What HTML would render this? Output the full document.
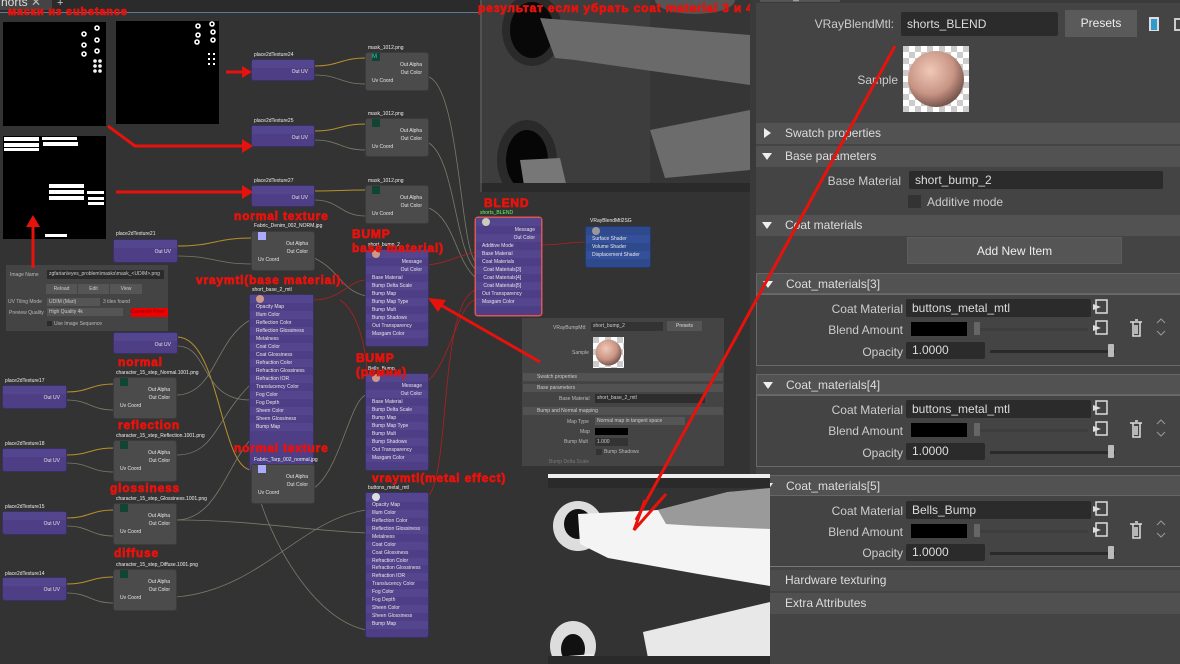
<!DOCTYPE html>
<html><head><meta charset="utf-8">
<style>
*{margin:0;padding:0;box-sizing:border-box}
body{width:1180px;height:664px;overflow:hidden;background:#333;font-family:"Liberation Sans","DejaVu Sans",sans-serif;position:relative}
.a{position:absolute}
.n{position:absolute;background:#4d3e86;border-radius:2px;color:#e6e6e6;font-size:5px;line-height:8px;box-shadow:0 0 0 1px #3a2f66}
.g{position:absolute;background:#4b4b4b;border-radius:2px;color:#e6e6e6;font-size:5px;line-height:8px;box-shadow:0 0 0 1px #3c3c3c}
.n div,.g div{padding:0 6px;white-space:nowrap;overflow:hidden}
.n div:nth-child(odd){background:#54458f}
.r{text-align:right}
.lb{position:absolute;color:#eee;font-size:5px;white-space:nowrap}
.ann{position:absolute;color:#e8120c;font-weight:900;font-size:12px;letter-spacing:0.8px;white-space:nowrap;font-family:"Liberation Sans","DejaVu Sans",sans-serif;-webkit-text-stroke:0.7px #e8120c}
.mk{position:absolute;background:#000}
.ic{display:inline-block;width:8px;height:8px;vertical-align:middle}
.hd{position:absolute;left:756px;width:424px;height:21px;background:#525252;color:#ddd;font-size:12px;line-height:21px;padding-left:29px}
.tri{position:absolute;left:6px;top:7px;width:0;height:0;border-left:5px solid transparent;border-right:5px solid transparent;border-top:7px solid #eee}
.trr{position:absolute;left:8px;top:5px;width:0;height:0;border-top:5px solid transparent;border-bottom:5px solid transparent;border-left:7px solid #eee}
.lab{position:absolute;color:#ccc;font-size:12px;text-align:right;white-space:nowrap}
.fld{position:absolute;background:#2b2b2b;color:#ddd;font-size:12px;line-height:19px;padding-left:6px;border-radius:2px}
.blk{position:absolute;background:#000;height:14px;width:56px}
.sl{position:absolute;height:3px;background:#2a2a2a}
.kn{position:absolute;width:6px;height:13px;background:#bbb;border-radius:1px}
.box{position:absolute;left:756px;width:424px;border:1px solid #6a6a6a;border-right:none}
</style></head><body>

<!-- top bar -->
<div class="a" style="left:0;top:0;width:480px;height:12px;background:#2b2b2b"></div>
<div class="a" style="left:0;top:-4px;width:52px;height:14px;background:#444;color:#ddd;font-size:12px;line-height:12px;padding-left:1px">horts <span style="color:#bbb">✕</span></div>
<div class="a" style="left:57px;top:-3px;color:#ccc;font-size:11px">+</div>
<div class="a" style="left:0;top:12px;width:480px;height:1px;background:#5a7b9a"></div>

<!-- masks -->
<div class="mk" style="left:3px;top:22px;width:103px;height:104px"></div>
<div class="mk" style="left:116px;top:21px;width:103px;height:103px"></div>
<div class="mk" style="left:3px;top:136px;width:103px;height:103px"></div>
<svg class="a" style="left:0;top:0" width="240" height="240">
<g fill="none" stroke="#fff" stroke-width="1.6">
<circle cx="84" cy="34" r="2"/><circle cx="97" cy="28" r="2"/><circle cx="84" cy="45" r="2"/><circle cx="97" cy="40" r="2"/><circle cx="84" cy="54" r="2"/><circle cx="97" cy="51" r="2"/>
<circle cx="95" cy="61" r="1"/><circle cx="100" cy="61" r="1"/><circle cx="95" cy="66" r="1"/><circle cx="100" cy="66" r="1"/><circle cx="95" cy="71" r="1"/><circle cx="100" cy="71" r="1"/>
<circle cx="198" cy="26" r="2"/><circle cx="212" cy="24" r="2"/><circle cx="198" cy="35" r="2"/><circle cx="213" cy="32" r="2"/><circle cx="197" cy="42" r="2"/><circle cx="213" cy="40" r="2"/>
</g>
<g fill="#fff"><rect x="208" y="53" width="2" height="2"/><rect x="213" y="53" width="2" height="2"/><rect x="208" y="58" width="2" height="2"/><rect x="213" y="58" width="2" height="2"/><rect x="208" y="63" width="2" height="2"/><rect x="213" y="63" width="2" height="2"/>
<rect x="4" y="137" width="35" height="4"/><rect x="4" y="143" width="35" height="4"/><rect x="4" y="148" width="35" height="3"/><rect x="42" y="137" width="35" height="3"/><rect x="43" y="142" width="35" height="4"/>
<rect x="49" y="184" width="35" height="4"/><rect x="49" y="190" width="35" height="4"/><rect x="49" y="196" width="35" height="4"/><rect x="87" y="191" width="17" height="3"/><rect x="88" y="197" width="16" height="3"/><rect x="88" y="202" width="16" height="3"/><rect x="45" y="234" width="22" height="3"/></g>
</svg>

<!-- image name panel -->
<div class="a" style="left:6px;top:265px;width:162px;height:66px;background:#444"></div>
<div class="a" style="left:10px;top:272px;font-size:5px;color:#bbb">Image Name</div>
<div class="a" style="left:47px;top:270px;width:117px;height:9px;background:#2b2b2b;font-size:5px;color:#ccc;line-height:9px;padding-left:2px">zgfarian\eyes_problem\masks\mask_&lt;UDIM&gt;.png</div>
<div class="a" style="left:46px;top:284px;width:31px;height:10px;background:#555;font-size:5px;color:#ccc;text-align:center;line-height:10px">Reload</div>
<div class="a" style="left:78px;top:284px;width:31px;height:10px;background:#555;font-size:5px;color:#ccc;text-align:center;line-height:10px">Edit</div>
<div class="a" style="left:110px;top:284px;width:32px;height:10px;background:#555;font-size:5px;color:#ccc;text-align:center;line-height:10px">View</div>
<div class="a" style="left:8px;top:299px;font-size:5px;color:#bbb">UV Tiling Mode</div>
<div class="a" style="left:47px;top:298px;width:53px;height:8px;background:#555;font-size:5px;color:#ccc;line-height:8px;padding-left:2px">UDIM (Mari)</div>
<div class="a" style="left:103px;top:299px;font-size:5px;color:#bbb">3 tiles found</div>
<div class="a" style="left:9px;top:310px;font-size:5px;color:#bbb">Preview Quality</div>
<div class="a" style="left:47px;top:308px;width:76px;height:8px;background:#555;font-size:5px;color:#ccc;line-height:8px;padding-left:2px">High Quality 4k</div>
<div class="a" style="left:131px;top:308px;width:37px;height:9px;background:#e00;font-size:5px;color:#800;line-height:9px">Generate Previ</div>
<div class="a" style="left:47px;top:321px;width:5px;height:5px;background:#2b2b2b"></div>
<div class="a" style="left:54px;top:321px;font-size:5px;color:#bbb">Use Image Sequence</div>

<!-- top render -->
<svg class="a" style="left:480px;top:0" width="270" height="192">
<rect x="0" y="0" width="270" height="192" fill="#3d3d3d"/>
<rect x="170" y="0" width="100" height="192" fill="#363636"/>
<ellipse cx="52" cy="30" rx="30" ry="36" fill="#2a2a2a"/><ellipse cx="52" cy="30" rx="22" ry="28" fill="#080808"/>
<ellipse cx="47" cy="160" rx="30" ry="40" fill="#2a2a2a"/><ellipse cx="47" cy="160" rx="21" ry="30" fill="#060606"/>
<path d="M60 18 L270 35 L270 85 L95 60 L75 58 Z" fill="#6a6a6a"/>
<path d="M170 130 L270 110 L270 170 L185 178 Z" fill="#6c6c6c"/>
<path d="M40 160 L80 158 L88 192 L45 192 Z" fill="#777"/>
<ellipse cx="215" cy="0" rx="40" ry="14" fill="#555"/>
<rect x="0" y="183" width="270" height="9" fill="#2a2a2a"/>
<line x1="1" y1="0" x2="1" y2="192" stroke="#666"/>
</svg>
<div class="ann" style="left:478px;top:1px;font-size:12px">результат если убрать coat material 3 и 4</div>

<!-- right attribute panel -->
<div class="a" style="left:750px;top:0;width:430px;height:664px;background:#444"></div>
<div class="a" style="left:750px;top:0;width:6px;height:664px;background:#3a3a3a"></div>
<div class="a" style="left:756px;top:0;width:424px;height:3px;background:#3a3a3a"></div>
<div class="a" style="left:760px;top:-7px;width:80px;height:9px;background:#555;color:#ddd;font-size:10px;line-height:8px;padding-left:6px">shorts_BLEND</div>
<div class="lab" style="left:800px;top:17px;width:94px">VRayBlendMtl:</div>
<div class="fld" style="left:901px;top:12px;width:157px;height:24px;line-height:24px">shorts_BLEND</div>
<div class="a" style="left:1065px;top:10px;width:72px;height:27px;background:#5a5a5a;color:#eee;font-size:12px;text-align:center;line-height:27px">Presets</div>
<div class="a" style="left:1149px;top:17px;width:10px;height:14px;background:#39c;border:2px solid #ddd;border-bottom-width:1px"></div>
<div class="a" style="left:1174px;top:18px;width:8px;height:13px;border:2px solid #ccc"></div>
<div class="lab" style="left:840px;top:73px;width:58px">Sample</div>
<svg class="a" style="left:903px;top:46px" width="66" height="66">
<defs><pattern id="ck" width="12" height="12" patternUnits="userSpaceOnUse"><rect width="12" height="12" fill="#fff"/><rect width="6" height="6" fill="#ccc"/><rect x="6" y="6" width="6" height="6" fill="#ccc"/></pattern>
<radialGradient id="sp" cx="0.4" cy="0.35" r="0.7"><stop offset="0" stop-color="#f0c8b8"/><stop offset="0.6" stop-color="#c89484"/><stop offset="1" stop-color="#6a4a44"/></radialGradient></defs>
<rect width="66" height="66" fill="url(#ck)"/><circle cx="33" cy="33" r="28" fill="url(#sp)"/></svg>
<div class="hd" style="top:123px"><span class="trr"></span>Swatch properties</div>
<div class="hd" style="top:146px"><span class="tri"></span>Base parameters</div>
<div class="lab" style="left:800px;top:174px;width:101px">Base Material</div>
<div class="fld" style="left:909px;top:171px;width:254px;height:18px;line-height:18px">short_bump_2</div>
<div class="a" style="left:908px;top:195px;width:13px;height:13px;background:#333"></div>
<div class="a" style="left:927px;top:195px;color:#ccc;font-size:12px">Additive mode</div>
<div class="hd" style="top:215px"><span class="tri"></span>Coat materials</div>
<div class="a" style="left:907px;top:237px;width:215px;height:27px;background:#555;color:#eee;font-size:12px;text-align:center;line-height:27px;border:1px solid #5c5c5c">Add New Item</div>

<!-- coat blocks -->
<div class="hd" style="top:273px;left:756px;border:1px solid #666;border-right:none"><span class="tri"></span>Coat_materials[3]</div>
<div class="box" style="top:294px;height:72px"></div>
<div class="lab" style="left:800px;top:302px;width:103px">Coat Material</div>
<div class="fld" style="left:906px;top:299px;width:185px;height:18px;line-height:18px">buttons_metal_mtl</div>
<div class="lab" style="left:800px;top:323px;width:103px">Blend Amount</div>
<div class="blk" style="left:911px;top:322px"></div><div class="sl" style="left:975px;top:328px;width:113px;background:#3e3e3e"></div><div class="kn" style="left:974px;top:322px;background:#666"></div>
<div class="lab" style="left:800px;top:345px;width:103px">Opacity</div>
<div class="fld" style="left:906px;top:342px;width:79px;height:17px;line-height:17px">1.0000</div>
<div class="sl" style="left:990px;top:350px;width:125px"></div><div class="kn" style="left:1108px;top:344px"></div>

<div class="hd" style="top:374px;border:1px solid #666;border-right:none"><span class="tri"></span>Coat_materials[4]</div>
<div class="box" style="top:395px;height:72px"></div>
<div class="lab" style="left:800px;top:403px;width:103px">Coat Material</div>
<div class="fld" style="left:906px;top:400px;width:185px;height:18px;line-height:18px">buttons_metal_mtl</div>
<div class="lab" style="left:800px;top:424px;width:103px">Blend Amount</div>
<div class="blk" style="left:911px;top:423px"></div><div class="sl" style="left:975px;top:429px;width:113px;background:#3e3e3e"></div><div class="kn" style="left:974px;top:423px;background:#666"></div>
<div class="lab" style="left:800px;top:446px;width:103px">Opacity</div>
<div class="fld" style="left:906px;top:443px;width:79px;height:17px;line-height:17px">1.0000</div>
<div class="sl" style="left:990px;top:451px;width:125px"></div><div class="kn" style="left:1108px;top:445px"></div>

<div class="hd" style="top:475px;border:1px solid #666;border-right:none"><span class="tri"></span>Coat_materials[5]</div>
<div class="lab" style="left:800px;top:504px;width:103px">Coat Material</div>
<div class="fld" style="left:906px;top:501px;width:185px;height:18px;line-height:18px">Bells_Bump</div>
<div class="lab" style="left:800px;top:525px;width:103px">Blend Amount</div>
<div class="blk" style="left:911px;top:524px"></div><div class="sl" style="left:975px;top:530px;width:113px;background:#3e3e3e"></div><div class="kn" style="left:974px;top:524px;background:#666"></div>
<div class="lab" style="left:800px;top:546px;width:103px">Opacity</div>
<div class="fld" style="left:906px;top:544px;width:79px;height:17px;line-height:17px">1.0000</div>
<div class="sl" style="left:990px;top:552px;width:125px"></div><div class="kn" style="left:1108px;top:546px"></div>
<div class="a" style="left:770px;top:566px;width:410px;height:1px;background:#777"></div>
<div class="hd" style="top:570px;left:770px;padding-left:15px;background:#4c4c4c">Hardware texturing</div>
<div class="hd" style="top:593px;left:770px;padding-left:15px;background:#505050">Extra Attributes</div>

<!-- side icons -->
<svg class="a" style="left:1090px;top:295px" width="90" height="270">
<g fill="none" stroke="#ddd" stroke-width="1.5">
<rect x="6" y="5" width="11" height="13"/><rect x="6" y="26" width="11" height="13"/>
<rect x="6" y="106" width="11" height="13"/><rect x="6" y="127" width="11" height="13"/>
<rect x="6" y="207" width="11" height="13"/><rect x="6" y="228" width="11" height="13"/>
</g>
<g fill="#ddd"><path d="M3 9 L11 12 L3 15Z"/><path d="M3 30 L11 33 L3 36Z"/><path d="M3 110 L11 113 L3 116Z"/><path d="M3 131 L11 134 L3 137Z"/><path d="M3 211 L11 214 L3 217Z"/><path d="M3 232 L11 235 L3 238Z"/></g>
<g fill="none" stroke="#ddd" stroke-width="1.5">
<path d="M40 27h12M43 27v14h7V27M45 25h3M45 30v9M47 30v9"/>
<path d="M40 128h12M43 128v14h7V128M45 126h3M45 131v9M47 131v9"/>
<path d="M40 229h12M43 229v14h7V229M45 227h3M45 232v9M47 232v9"/>
</g>
<g fill="none" stroke="#999" stroke-width="1"><path d="M67 28l4-4 4 4M67 36l4 4 4-4M67 129l4-4 4 4M67 137l4 4 4-4M67 230l4-4 4 4M67 238l4 4 4-4"/></g>
</svg>

<!-- small attribute panel -->
<div class="a" style="left:522px;top:318px;width:202px;height:148px;background:#444"></div>
<div class="a" style="left:553px;top:325px;font-size:5px;color:#bbb">VRayBumpMtl:</div>
<div class="a" style="left:591px;top:322px;width:72px;height:9px;background:#333;font-size:5px;color:#ccc;line-height:9px;padding-left:2px">short_bump_2</div>
<div class="a" style="left:667px;top:321px;width:35px;height:10px;background:#555;font-size:5px;color:#ddd;text-align:center;line-height:10px">Presets</div>
<div class="a" style="left:572px;top:350px;font-size:5px;color:#bbb">Sample</div>
<svg class="a" style="left:593px;top:337px" width="31" height="31"><rect width="31" height="31" fill="url(#ck)"/><circle cx="15.5" cy="15.5" r="13" fill="url(#sp)"/></svg>
<div class="a" style="left:523px;top:373px;width:200px;height:8px;background:#525252;font-size:5px;color:#ccc;line-height:8px;padding-left:14px">Swatch properties</div>
<div class="a" style="left:523px;top:384px;width:200px;height:8px;background:#525252;font-size:5px;color:#ccc;line-height:8px;padding-left:14px">Base parameters</div>
<div class="a" style="left:559px;top:396px;font-size:5px;color:#bbb">Base Material</div>
<div class="a" style="left:595px;top:394px;width:110px;height:9px;background:#2d2d2d;font-size:5px;color:#ccc;line-height:9px;padding-left:2px">short_base_2_mtl</div>
<div class="a" style="left:523px;top:407px;width:200px;height:8px;background:#525252;font-size:5px;color:#ccc;line-height:8px;padding-left:14px">Bump and Normal mapping</div>
<div class="a" style="left:567px;top:419px;font-size:5px;color:#bbb">Map Type</div>
<div class="a" style="left:595px;top:417px;width:90px;height:8px;background:#555;font-size:5px;color:#ccc;line-height:8px;padding-left:2px">Normal map in tangent space</div>
<div class="a" style="left:580px;top:429px;font-size:5px;color:#bbb">Map</div>
<div class="a" style="left:595px;top:428px;width:33px;height:7px;background:#000"></div>
<div class="a" style="left:564px;top:439px;font-size:5px;color:#bbb">Bump Mult</div>
<div class="a" style="left:595px;top:438px;width:33px;height:8px;background:#333;font-size:5px;color:#ccc;line-height:8px;padding-left:2px">1.000</div>
<div class="a" style="left:596px;top:449px;width:6px;height:6px;background:#333"></div>
<div class="a" style="left:604px;top:449px;font-size:5px;color:#bbb">Bump Shadows</div>
<div class="a" style="left:549px;top:459px;font-size:5px;color:#777">Bump Delta Scale</div>

<!-- bottom render -->
<svg class="a" style="left:548px;top:474px" width="222" height="190">
<rect width="222" height="190" fill="#333"/>
<rect width="222" height="4" fill="#eee"/>
<rect y="4" width="222" height="10" fill="#2a2a2a"/>
<ellipse cx="30" cy="52" rx="25" ry="25" fill="#ddd"/><ellipse cx="30" cy="50" rx="14" ry="15" fill="#111"/>
<ellipse cx="25" cy="172" rx="23" ry="25" fill="#ddd"/><ellipse cx="25" cy="175" rx="12" ry="15" fill="#111"/>
<path d="M30 40 L110 36 L180 18 L222 16 L222 112 L150 100 L60 84 L32 70Z" fill="#f4f4f4"/>
<path d="M110 36 L180 18 L222 14 L222 55 L150 52 L118 50Z" fill="#9a9a9a"/>
<path d="M95 158 L222 128 L222 182 L100 184Z" fill="#e8e8e8"/>
<path d="M20 182 L45 180 L48 190 L22 190Z" fill="#eee"/>
<rect y="182" width="222" height="8" fill="#2a2a2a"/>
</svg>

<!-- wires -->
<svg class="a" style="left:0;top:0" width="750" height="664">
<g fill="none" stroke="#b8912d" stroke-width="1">
<path d="M314 66 C340 66,340 58,366 58"/><path d="M314 131 C340 131,340 124,366 124"/><path d="M314 191 C340 191,340 190,366 190"/>
<path d="M177 246 C215 246,215 238,252 238"/>
<path d="M66 392 C90 392,90 384,114 384"/><path d="M66 455 C90 455,90 448,114 448"/><path d="M66 518 C90 518,90 510,114 510"/><path d="M66 584 C90 584,90 577,114 577"/>
<path d="M177 337 C220 337,220 470,252 470"/>
</g>
<g fill="none" stroke="#7a7a6a" stroke-width="0.8">
<path d="M314 75 C340 75,340 84,366 84"/><path d="M314 140 C340 140,340 150,366 150"/><path d="M314 200 C340 200,340 216,366 216"/>
<path d="M429 77 C460 90,460 250,476 262"/><path d="M429 143 C455 160,455 250,476 270"/><path d="M429 208 C455 220,455 260,476 278"/>
<path d="M177 256 C215 256,215 264,252 264"/><path d="M314 258 C340 270,340 290,366 296"/>
<path d="M176 395 C215 395,215 340,250 320"/><path d="M176 455 C215 455,215 420,250 385"/><path d="M176 520 C215 520,225 470,250 440"/><path d="M176 597 C260 590,300 520,366 510"/>
<path d="M66 400 C90 400,90 410,114 410"/><path d="M66 463 C90 463,90 472,114 472"/><path d="M66 526 C90 526,90 536,114 536"/><path d="M66 593 C90 593,90 603,114 603"/>
<path d="M176 520 C250 520,300 530,366 533"/><path d="M314 488 C340 470,350 400,366 395"/>
<path d="M260 500 C280 560,320 620,366 630"/><path d="M177 346 C210 346,200 400,250 400"/>
</g>
<g fill="none" stroke="#b02020" stroke-width="0.8">
<path d="M429 265 C450 262,460 255,476 252"/><path d="M314 300 C340 300,350 280,366 280"/><path d="M541 245 C560 245,570 242,586 242"/>
<path d="M429 495 C450 470,440 300,476 290"/><path d="M429 380 C450 360,460 300,476 300"/><path d="M340 300 C370 320,370 400,366 405"/>
</g>
</svg>

<!-- nodes -->
<div class="lb" style="left:254px;top:52px">place2dTexture24</div>
<div class="n" style="left:252px;top:60px;width:62px;height:20px"><div>&nbsp;</div><div class="r">Out UV</div></div>
<div class="lb" style="left:368px;top:45px">mask_1012.png</div>
<div class="g" style="left:366px;top:53px;width:62px;height:37px"><div><span class="ic" style="background:#143;color:#3cc;font-size:6px">M</span></div><div class="r">Out Alpha</div><div class="r">Out Color</div><div>Uv Coord</div></div>
<div class="lb" style="left:254px;top:118px">place2dTexture25</div>
<div class="n" style="left:252px;top:126px;width:62px;height:20px"><div>&nbsp;</div><div class="r">Out UV</div></div>
<div class="lb" style="left:368px;top:111px">mask_1012.png</div>
<div class="g" style="left:366px;top:119px;width:62px;height:37px"><div><span class="ic" style="background:#143"></span></div><div class="r">Out Alpha</div><div class="r">Out Color</div><div>Uv Coord</div></div>
<div class="lb" style="left:254px;top:178px">place2dTexture27</div>
<div class="n" style="left:252px;top:186px;width:62px;height:20px"><div>&nbsp;</div><div class="r">Out UV</div></div>
<div class="lb" style="left:368px;top:178px">mask_1012.png</div>
<div class="g" style="left:366px;top:186px;width:62px;height:37px"><div><span class="ic" style="background:#143"></span></div><div class="r">Out Alpha</div><div class="r">Out Color</div><div>Uv Coord</div></div>

<div class="lb" style="left:116px;top:231px">place2dTexture21</div>
<div class="n" style="left:114px;top:240px;width:63px;height:22px"><div>&nbsp;</div><div class="r">Out UV</div></div>
<div class="lb" style="left:254px;top:223px">Fabric_Denim_002_NORM.jpg</div>
<div class="g" style="left:252px;top:232px;width:62px;height:38px"><div><span class="ic" style="background:#aaf"></span></div><div class="r">Out Alpha</div><div class="r">Out Color</div><div>Uv Coord</div></div>

<div class="lb" style="left:368px;top:242px">short_bump_2</div>
<div class="n" style="left:366px;top:250px;width:62px;height:96px"><div><span class="ic" style="background:#c98;border-radius:50%"></span></div><div class="r">Message</div><div class="r">Out Color</div><div>Base Material</div><div>Bump Delta Scale</div><div>Bump Map</div><div>Bump Map Type</div><div>Bump Mult</div><div>Bump Shadows</div><div>Out Transparency</div><div>Maxgam Color</div></div>

<div class="lb" style="left:252px;top:287px">short_base_2_mtl</div>
<div class="n" style="left:250px;top:295px;width:63px;height:176px"><div><span class="ic" style="background:#c98;border-radius:50%"></span></div><div>Opacity Map</div><div>Illum Color</div><div>Reflection Color</div><div>Reflection Glossiness</div><div>Metalness</div><div>Coat Color</div><div>Coat Glossiness</div><div>Refraction Color</div><div>Refraction Glossiness</div><div>Refraction IOR</div><div>Translucency Color</div><div>Fog Color</div><div>Fog Depth</div><div>Sheen Color</div><div>Sheen Glossiness</div><div>Bump Map</div></div>

<div class="lb" style="left:480px;top:210px;color:#6f6">shorts_BLEND</div>
<div class="n" style="left:476px;top:218px;width:65px;height:97px;box-shadow:0 0 0 1.5px #d55"><div><span class="ic" style="background:#ccb;border-radius:50%"></span></div><div class="r">Message</div><div class="r">Out Color</div><div>Additive Mode</div><div>Base Material</div><div>Coat Materials</div><div>&nbsp;Coat Materials[3]</div><div>&nbsp;Coat Materials[4]</div><div>&nbsp;Coat Materials[5]</div><div>Out Transparency</div><div>Maxgam Color</div></div>

<div class="lb" style="left:590px;top:218px">VRayBlendMtl2SG</div>
<div class="n" style="left:586px;top:227px;width:64px;height:40px;background:#2f4a8c;box-shadow:0 0 0 1px #24396c"><div style="background:#2f4a8c"><span class="ic" style="background:#999;border-radius:50%"></span></div><div style="background:#34509a">Surface Shader</div><div style="background:#2f4a8c">Volume Shader</div><div style="background:#34509a">Displacement Shader</div></div>

<div class="lb" style="left:368px;top:366px">Bells_Bump</div>
<div class="n" style="left:366px;top:374px;width:62px;height:96px"><div><span class="ic" style="background:#c98;border-radius:50%"></span></div><div class="r">Message</div><div class="r">Out Color</div><div>Base Material</div><div>Bump Delta Scale</div><div>Bump Map</div><div>Bump Map Type</div><div>Bump Mult</div><div>Bump Shadows</div><div>Out Transparency</div><div>Maxgam Color</div></div>

<div class="lb" style="left:254px;top:457px">Fabric_Tarp_002_normal.jpg</div>
<div class="g" style="left:252px;top:465px;width:62px;height:38px"><div><span class="ic" style="background:#aaf"></span></div><div class="r">Out Alpha</div><div class="r">Out Color</div><div>Uv Coord</div></div>

<div class="lb" style="left:368px;top:485px">buttons_metal_mtl</div>
<div class="n" style="left:366px;top:493px;width:62px;height:144px;line-height:7.9px"><div><span class="ic" style="background:#ddd;border-radius:50%"></span></div><div>Opacity Map</div><div>Illum Color</div><div>Reflection Color</div><div>Reflection Glossiness</div><div>Metalness</div><div>Coat Color</div><div>Coat Glossiness</div><div>Refraction Color</div><div>Refraction Glossiness</div><div>Refraction IOR</div><div>Translucency Color</div><div>Fog Color</div><div>Fog Depth</div><div>Sheen Color</div><div>Sheen Glossiness</div><div>Bump Map</div></div>

<div class="n" style="left:114px;top:333px;width:63px;height:20px"><div>&nbsp;</div><div class="r">Out UV</div></div>
<div class="lb" style="left:5px;top:378px">place2dTexture17</div>
<div class="n" style="left:3px;top:386px;width:63px;height:22px"><div>&nbsp;</div><div class="r">Out UV</div></div>
<div class="lb" style="left:5px;top:441px">place2dTexture18</div>
<div class="n" style="left:3px;top:449px;width:63px;height:22px"><div>&nbsp;</div><div class="r">Out UV</div></div>
<div class="lb" style="left:5px;top:504px">place2dTexture15</div>
<div class="n" style="left:3px;top:512px;width:63px;height:22px"><div>&nbsp;</div><div class="r">Out UV</div></div>
<div class="lb" style="left:5px;top:571px">place2dTexture14</div>
<div class="n" style="left:3px;top:578px;width:63px;height:22px"><div>&nbsp;</div><div class="r">Out UV</div></div>

<div class="lb" style="left:116px;top:370px">character_15_step_Normal.1001.png</div>
<div class="g" style="left:114px;top:378px;width:62px;height:40px"><div><span class="ic" style="background:#143"></span></div><div class="r">Out Alpha</div><div class="r">Out Color</div><div>Uv Coord</div></div>
<div class="lb" style="left:116px;top:433px">character_15_step_Reflection.1001.png</div>
<div class="g" style="left:114px;top:441px;width:62px;height:40px"><div><span class="ic" style="background:#143"></span></div><div class="r">Out Alpha</div><div class="r">Out Color</div><div>Uv Coord</div></div>
<div class="lb" style="left:116px;top:496px">character_15_step_Glossiness.1001.png</div>
<div class="g" style="left:114px;top:504px;width:62px;height:40px"><div><span class="ic" style="background:#143"></span></div><div class="r">Out Alpha</div><div class="r">Out Color</div><div>Uv Coord</div></div>
<div class="lb" style="left:116px;top:562px">character_15_step_Diffuse.1001.png</div>
<div class="g" style="left:114px;top:570px;width:62px;height:40px"><div><span class="ic" style="background:#143"></span></div><div class="r">Out Alpha</div><div class="r">Out Color</div><div>Uv Coord</div></div>

<!-- annotations -->
<div class="ann" style="left:8px;top:6px;font-size:11px">маски из substance</div>
<div class="ann" style="left:234px;top:209px">normal texture</div>
<div class="ann" style="left:352px;top:227px;line-height:14px">BUMP<br>base material)</div>
<div class="ann" style="left:196px;top:273px">vraymtl(base material).</div>
<div class="ann" style="left:484px;top:196px">BLEND</div>
<div class="ann" style="left:356px;top:351px;line-height:14px">BUMP<br>(ремни)</div>
<div class="ann" style="left:118px;top:355px">normal</div>
<div class="ann" style="left:118px;top:418px">reflection</div>
<div class="ann" style="left:110px;top:481px">glossiness</div>
<div class="ann" style="left:114px;top:546px">diffuse</div>
<div class="ann" style="left:234px;top:441px">normal texture</div>
<div class="ann" style="left:372px;top:471px">vraymtl(metal effect)</div>

<svg class="a" style="left:0;top:0" width="1180" height="664">
<g stroke="#e8120c" stroke-width="3" fill="none">
<path d="M226 72 L244 72"/><path d="M108 126 L135 146 L248 146"/><path d="M116 192 L248 192"/>
<path d="M33 268 L33 222"/>
<path d="M540 362 L432 300"/>
<path d="M895 46 L636 520"/>
</g>
<g fill="#e8120c">
<path d="M252 72 L242 66 L242 78Z"/><path d="M253 146 L242 139 L242 153Z"/><path d="M253 192 L242 185 L242 199Z"/>
<path d="M33 215 L26 227 L40 227Z"/><path d="M428 298 L446 300 L438 312Z"/>
</g>
<path d="M666 494 L634 530 L645 500" stroke="#e8120c" stroke-width="3" fill="none"/>
</svg>
</body></html>
